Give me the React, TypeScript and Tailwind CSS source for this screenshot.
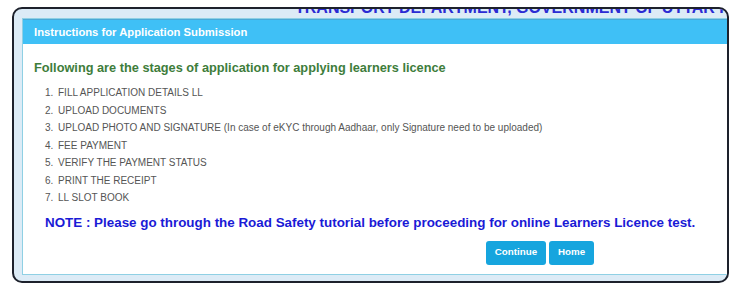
export default function App() {
  const steps = [
    "FILL APPLICATION DETAILS LL",
    "UPLOAD DOCUMENTS",
    "UPLOAD PHOTO AND SIGNATURE (In case of eKYC through Aadhaar, only Signature need to be uploaded)",
    "FEE PAYMENT",
    "VERIFY THE PAYMENT STATUS",
    "PRINT THE RECEIPT",
    "LL SLOT BOOK",
  ];
  return (
    <div className="w-[739px] h-[294px] bg-white pt-[7px] pl-[12px]" style={{ fontFamily: '"Liberation Sans", Arial, sans-serif' }}>
      <div className="w-[717px] h-[276px] border-2 border-[#1d212c] rounded-[10px] bg-[#dcebf6] overflow-hidden flex flex-col">
        <div className="h-[9px] overflow-hidden">
          <div className="mt-[-9px] pl-[281px] whitespace-nowrap text-[16px] leading-[16px] font-bold text-[#2b2bd3]">
            TRANSPORT DEPARTMENT, GOVERNMENT OF UTTAR PRADESH
          </div>
        </div>
        <div className="ml-[8px] w-[1036px] shrink-0 border border-[#8fd0e4] bg-white">
          <div className="h-[25px] bg-[#3fc0f6] border-t border-[#4aa9d6] flex items-center pl-[11px] text-[11.25px] font-bold text-white">
            Instructions for Application Submission
          </div>
          <div className="pt-[15px] pb-[9px] pl-[11px]">
            <div className="text-[12.75px] leading-[18px] font-bold text-[#3e7d3b]">
              Following are the stages of application for applying learners licence
            </div>
            <ol className="mt-[7px] pl-[11px] text-[10px] leading-[17.5px] text-[#555555]">
              {steps.map((s, i) => (
                <li key={i} className="flex">
                  <span className="w-[13px]">{i + 1}.</span>
                  <span>{s}</span>
                </li>
              ))}
            </ol>
            <div className="mt-[6px] pl-[11px] text-[13.4px] leading-[20px] font-bold text-[#1a1ad6]">
              NOTE : Please go through the Road Safety tutorial before proceeding for online Learners Licence test.
            </div>
            <div className="mt-[8px] flex justify-center gap-[3px] pr-[11px]">
              <button className="h-[24px] px-[9px] rounded-[3px] bg-[#16a5de] text-white text-[9.75px] font-bold">Continue</button>
              <button className="h-[24px] px-[9px] rounded-[3px] bg-[#16a5de] text-white text-[9.75px] font-bold">Home</button>
            </div>
          </div>
        </div>
      </div>
    </div>
  );
}
